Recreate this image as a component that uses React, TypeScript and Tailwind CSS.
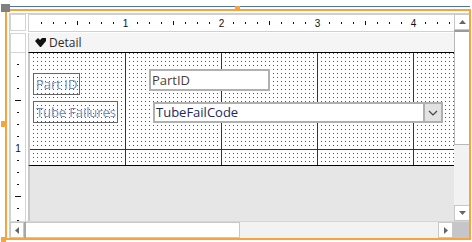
const rulerTicks = Array.from({ length: 35 }, (_, i) => i + 1);
const sideTicks = Array.from({ length: 14 }, (_, i) => i + 1);

function TopRuler() {
  return (
    <svg width="424" height="16" className="block">
      {rulerTicks.map((k) =>
        k % 8 === 0 ? (
          <text
            key={k}
            x={12 * k + 0.5}
            y={12}
            textAnchor="middle"
            fontSize="10"
            fontFamily="'Liberation Sans', sans-serif"
            fill="#111"
          >
            {k / 8}
          </text>
        ) : (
          <rect key={k} x={12 * k} y={k % 4 === 0 ? 6 : 7} width="1" height={k % 4 === 0 ? 4 : 2} fill="#111" />
        ),
      )}
    </svg>
  );
}

function SideRuler() {
  return (
    <svg width="14" height="168" className="block">
      {sideTicks.map((k) =>
        k % 8 === 0 ? (
          <text
            key={k}
            x={7}
            y={12 * k + 3}
            textAnchor="middle"
            fontSize="10"
            fontFamily="'Liberation Sans', sans-serif"
            fill="#111"
          >
            {k / 8}
          </text>
        ) : (
          <rect
            key={k}
            x={k % 4 === 0 ? 4 : 6}
            y={12 * k - 1}
            width={k % 4 === 0 ? 6 : 2}
            height="1"
            fill="#111"
          />
        ),
      )}
    </svg>
  );
}

function GridRow({ className }: { className: string }) {
  return (
    <div className={`flex ${className}`}>
      <div className="w-[96px] border-r border-[#333]" />
      <div className="w-[96px] border-r border-[#333]" />
      <div className="w-[96px] border-r border-[#333]" />
      <div className="w-[96px] border-r border-[#333]" />
      <div className="flex-1" />
    </div>
  );
}

export default function App() {
  return (
    <div className="relative h-[242px] w-[472px] overflow-hidden bg-white pl-[9px] pt-[13px] font-['Open_Sans',sans-serif]">
      <div className="flex h-[225px] w-[461px] flex-col border-l border-t border-[#cfcfcf]">
        <div className="flex h-[207px]">
          {/* vertical ruler */}
          <div className="flex w-[18px] flex-col">
            <div className="h-[17px] w-[16px] border border-[#d4d4d4]" />
            <div className="mt-[2px] h-[20px] w-[16px] border border-[#d4d4d4]" />
            <div className="h-[168px] w-[16px] border-x border-[#d4d4d4]">
              <SideRuler />
            </div>
          </div>

          {/* design surface */}
          <div className="flex w-[426px] flex-col">
            <div className="h-[18px] border-y border-l border-[#d0d0d0] bg-white">
              <TopRuler />
            </div>
            <div className="mt-[1px] flex h-[20px] items-center gap-[3px] border-b border-l border-b-black border-l-[#d0d0d0] bg-[#f5f5f5] pl-[6px]">
              <svg width="11" height="9" viewBox="0 0 11 9" aria-hidden="true">
                <path d="M0 3 L3 0 L5 2 L7 0 L11 0 L11 3 L6 9 L5 9 Z" fill="#111" />
              </svg>
              <span className="text-[12px] leading-none text-[#2b2b2b]">Detail</span>
            </div>
            <div className="relative h-[113px] border-b border-l-2 border-b-black border-l-[#c8c8c8] bg-[linear-gradient(90deg,#fff_3px,transparent_3px),linear-gradient(#555_1px,#fff_1px)] bg-[length:4px_4px]">
              <GridRow className="h-[97px] border-b border-[#333]" />
              <GridRow className="h-[15px]" />

              <div className="absolute left-[3px] top-[20px] flex h-[22px] w-[47px] items-center whitespace-nowrap border border-[#666] pl-[2px] text-[13px] leading-none text-[#7b8fb0]">
                Part ID
              </div>
              <div className="absolute left-[3px] top-[48px] flex h-[22px] w-[85px] items-center whitespace-nowrap border border-[#666] pl-[2px] text-[13px] leading-none tracking-[-0.1px] text-[#7b8fb0]">
                Tube Failures
              </div>
              <div className="absolute left-[119px] top-[16px] flex h-[22px] w-[121px] items-center border-2 border-[#b0b0b0] bg-white pl-[1px] text-[13px] leading-none text-[#4a3f36]">
                PartID
              </div>
              <div className="absolute left-[123px] top-[49px] flex h-[21px] w-[290px] items-center border-2 border-[#b0b0b0] bg-white text-[13px] leading-none text-[#1d2b5c]">
                <span className="flex-1 pl-[1px]">TubeFailCode</span>
                <span className="flex h-full w-[18px] items-center justify-center border-l-2 border-[#b0b0b0] bg-[#e3e3e3]">
                  <svg width="10" height="6" viewBox="0 0 10 6" aria-hidden="true">
                    <path d="M1 1 L5 5 L9 1" fill="none" stroke="#444" strokeWidth="1.2" />
                  </svg>
                </span>
              </div>
            </div>
            <div className="h-[55px] border-l-2 border-[#c8c8c8] bg-[#e6e6e6]" />
          </div>

          {/* vertical scrollbar */}
          <div className="flex w-[16px] flex-col">
            <div className="flex h-[16px] items-center justify-center border border-[#c8c8c8] bg-white">
              <svg width="7" height="4" viewBox="0 0 7 4" aria-hidden="true">
                <path d="M0 4 L3.5 0 L7 4 Z" fill="#666" />
              </svg>
            </div>
            <div className="h-[115px] border-x border-b border-t-2 border-x-[#b8b8b8] border-b-[#b8b8b8] border-t-[#9a9a9a] bg-white" />
            <div className="h-[60px] bg-[#f2f2f2]" />
            <div className="flex h-[16px] items-center justify-center border border-[#c8c8c8] bg-white">
              <svg width="7" height="4" viewBox="0 0 7 4" aria-hidden="true">
                <path d="M0 0 L7 0 L3.5 4 Z" fill="#666" />
              </svg>
            </div>
          </div>
        </div>

        {/* horizontal scrollbar */}
        <div className="flex h-[17px] border-t border-[#d6d6d6]">
          <div className="flex w-[14px] items-center justify-center border border-[#c8c8c8] bg-white">
            <svg width="4" height="7" viewBox="0 0 4 7" aria-hidden="true">
              <path d="M4 0 L4 7 L0 3.5 Z" fill="#666" />
            </svg>
          </div>
          <div className="w-[2px] bg-[#a8a8a8]" />
          <div className="w-[214px] border-y border-r border-[#c8c8c8] bg-white" />
          <div className="flex-1 bg-[#f2f2f2]" />
          <div className="flex w-[15px] items-center justify-center border border-[#c8c8c8] bg-white">
            <svg width="4" height="7" viewBox="0 0 4 7" aria-hidden="true">
              <path d="M0 0 L4 3.5 L0 7 Z" fill="#666" />
            </svg>
          </div>
          <div className="w-[17px] bg-[#c6c6ca]" />
        </div>
      </div>

      {/* selection chrome */}
      <div className="absolute left-[10px] top-[6px] h-px w-[460px] bg-[#4f71ac]" />
      <div className="pointer-events-none absolute left-[5px] top-[9px] h-[231px] w-[466px] border-2 border-[#f8a43c]" />
      <div className="absolute left-[1px] top-[4px] h-[8px] w-[9px] bg-[#808080]" />
      <div className="absolute left-[235px] top-[6px] h-[5px] w-[5px] bg-[#f8a43c]" />
      <div className="absolute left-[1px] top-[121px] h-[6px] w-[5px] bg-[#f8a43c]" />
      <div className="absolute left-[1px] top-[237px] h-[5px] w-[5px] bg-[#f8a43c]" />
    </div>
  );
}
